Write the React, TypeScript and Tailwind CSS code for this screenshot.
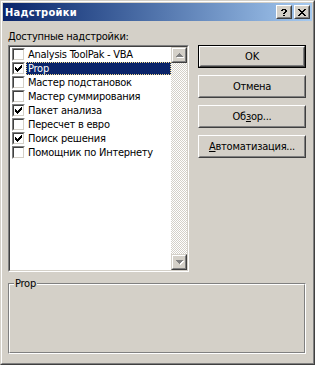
import React from "react";

type R = [number, number, number, number];

function Pix({ w, h, rects, fill }: { w: number; h: number; rects: R[]; fill: string }) {
  return (
    <svg width={w} height={h} viewBox={`0 0 ${w} ${h}`} shapeRendering="crispEdges" className="block">
      {rects.map(([x, y, rw, rh], i) => (
        <rect key={i} x={x} y={y} width={rw} height={rh} fill={fill} />
      ))}
    </svg>
  );
}

const checkRects: R[] = [2, 3, 4, 3, 2, 1, 0].map((y, x) => [x, y, 1, 3] as R);
const closeRects: R[] = [
  [0, 0, 2, 1], [6, 0, 2, 1],
  [1, 1, 2, 1], [5, 1, 2, 1],
  [2, 2, 4, 1],
  [3, 3, 2, 1],
  [2, 4, 4, 1],
  [1, 5, 2, 1], [5, 5, 2, 1],
  [0, 6, 2, 1], [6, 6, 2, 1],
];
const helpRects: R[] = [
  [1, 0, 4, 1],
  [0, 1, 2, 1], [4, 1, 2, 1],
  [4, 2, 2, 1],
  [3, 3, 2, 1],
  [2, 4, 2, 1],
  [2, 6, 2, 1],
];
const upRects: R[] = [[3, 0, 1, 1], [2, 1, 3, 1], [1, 2, 5, 1], [0, 3, 7, 1]];
const downRects: R[] = [[0, 0, 7, 1], [1, 1, 5, 1], [2, 2, 3, 1], [3, 3, 1, 1]];

function CaptionBtn({ children }: { children: React.ReactNode }) {
  return (
    <div className="w-4 h-[14px] border border-t-white border-l-white border-r-[#404040] border-b-[#404040]">
      <div className="w-full h-full border border-t-[#d4d0c8] border-l-[#d4d0c8] border-r-[#808080] border-b-[#808080] bg-[#d4d0c8] flex items-center justify-center">
        {children}
      </div>
    </div>
  );
}

function Checkbox({ checked }: { checked: boolean }) {
  return (
    <div className="w-[13px] h-[13px] shrink-0 border border-t-[#808080] border-l-[#808080] border-r-white border-b-white">
      <div className="w-full h-full border border-t-[#404040] border-l-[#404040] border-r-[#d4d0c8] border-b-[#d4d0c8] bg-white pl-px pt-px">
        {checked && <Pix w={7} h={7} rects={checkRects} fill="#000" />}
      </div>
    </div>
  );
}

function ScrollBtn({ rects }: { rects: R[] }) {
  return (
    <div className="w-4 h-4 shrink-0 border border-t-[#d4d0c8] border-l-[#d4d0c8] border-r-[#404040] border-b-[#404040]">
      <div className="w-full h-full border border-t-white border-l-white border-r-[#808080] border-b-[#808080] bg-[#d4d0c8] relative">
        <div className="absolute left-[4px] top-[5px]">
          <Pix w={7} h={4} rects={rects} fill="#ffffff" />
        </div>
        <div className="absolute left-[3px] top-[4px]">
          <Pix w={7} h={4} rects={rects} fill="#808080" />
        </div>
      </div>
    </div>
  );
}

function Button({ children, isDefault }: { children: React.ReactNode; isDefault?: boolean }) {
  const inner = (
    <div className="w-full h-full border border-t-white border-l-white border-r-[#404040] border-b-[#404040]">
      <div className="w-full h-full border border-t-[#d4d0c8] border-l-[#d4d0c8] border-r-[#808080] border-b-[#808080] flex items-center justify-center">
        {children}
      </div>
    </div>
  );
  return (
    <div className={isDefault ? "w-[108px] h-[23px] border border-black" : "w-[108px] h-[23px]"}>{inner}</div>
  );
}

const items: { label: string; checked: boolean }[] = [
  { label: "Analysis ToolPak - VBA", checked: false },
  { label: "Prop", checked: true },
  { label: "Мастер подстановок", checked: false },
  { label: "Мастер суммирования", checked: false },
  { label: "Пакет анализа", checked: true },
  { label: "Пересчет в евро", checked: false },
  { label: "Поиск решения", checked: true },
  { label: "Помощник по Интернету", checked: false },
];

export default function App() {
  return (
    <div
      className="w-[315px] h-[365px] border border-t-[#d4d0c8] border-l-[#d4d0c8] border-r-[#404040] border-b-[#404040] text-[11px] leading-[13px] text-black tracking-[-0.25px]"
      style={{ fontFamily: '"DejaVu Sans Condensed", "Liberation Sans", Arial, sans-serif' }}
    >
      <div className="w-full h-full border border-t-white border-l-white border-r-[#808080] border-b-[#808080] bg-[#d4d0c8] p-px flex flex-col">
        {/* title bar */}
        <div className="h-[18px] shrink-0 bg-linear-to-r from-[#0a246a] to-[#a6caf0] flex items-center pl-[2px] pr-[2px]">
          <span className="font-bold text-white flex-1 tracking-[0.3px]">Надстройки</span>
          <div className="flex gap-[2px]">
            <CaptionBtn>
              <Pix w={6} h={7} rects={helpRects} fill="#000" />
            </CaptionBtn>
            <CaptionBtn>
              <Pix w={8} h={7} rects={closeRects} fill="#000" />
            </CaptionBtn>
          </div>
        </div>

        {/* body */}
        <div className="flex flex-col pl-[5px] pr-[6px] pt-[9px]">
          <div className="mb-[2px]">
            <span className="underline">Д</span>оступные надстройки:
          </div>
          <div className="flex gap-[9px]">
            {/* listbox */}
            <div className="w-[181px] h-[227px] border border-t-[#808080] border-l-[#808080] border-r-white border-b-white">
              <div className="w-full h-full border border-t-[#404040] border-l-[#404040] border-r-[#d4d0c8] border-b-[#d4d0c8] bg-white flex">
                <div className="flex-1 flex flex-col">
                  {items.map((it, i) => {
                    const sel = i === 1;
                    return (
                      <div key={i} className="h-[14px] pt-px pl-[2px] flex">
                        <Checkbox checked={it.checked} />
                        <div
                          className={
                            sel
                              ? "ml-px flex-1 h-[13px] flex items-center pl-px border border-dotted border-[#f2d98a] bg-[#0a246a] text-white whitespace-nowrap"
                              : "ml-px flex-1 h-[13px] flex items-center pl-[2px] whitespace-nowrap"
                          }
                        >
                          {it.label}
                        </div>
                      </div>
                    );
                  })}
                </div>
                {/* scrollbar */}
                <div className="w-4 flex flex-col">
                  <ScrollBtn rects={upRects} />
                  <div className="flex-1 bg-[image:repeating-conic-gradient(#ffffff_0_25%,#d4d0c8_0_50%)] bg-[length:2px_2px]" />
                  <ScrollBtn rects={downRects} />
                </div>
              </div>
            </div>
            {/* buttons */}
            <div className="flex flex-col gap-[7px]">
              <Button isDefault>OK</Button>
              <Button>Отмена</Button>
              <Button>
                <span>
                  Об<span className="underline">з</span>ор...
                </span>
              </Button>
              <Button>
                <span>
                  <span className="underline">А</span>втоматизация...
                </span>
              </Button>
            </div>
          </div>

          {/* group box */}
          <div className="mt-[11px] relative w-[298px] h-[71px] border border-t-[#808080] border-l-[#808080] border-r-white border-b-white">
            <div className="w-full h-full border border-t-white border-l-white border-r-[#808080] border-b-[#808080]" />
            <div className="absolute left-[5px] top-[-7px] bg-[#d4d0c8] px-px">Prop</div>
          </div>
        </div>
      </div>
    </div>
  );
}
